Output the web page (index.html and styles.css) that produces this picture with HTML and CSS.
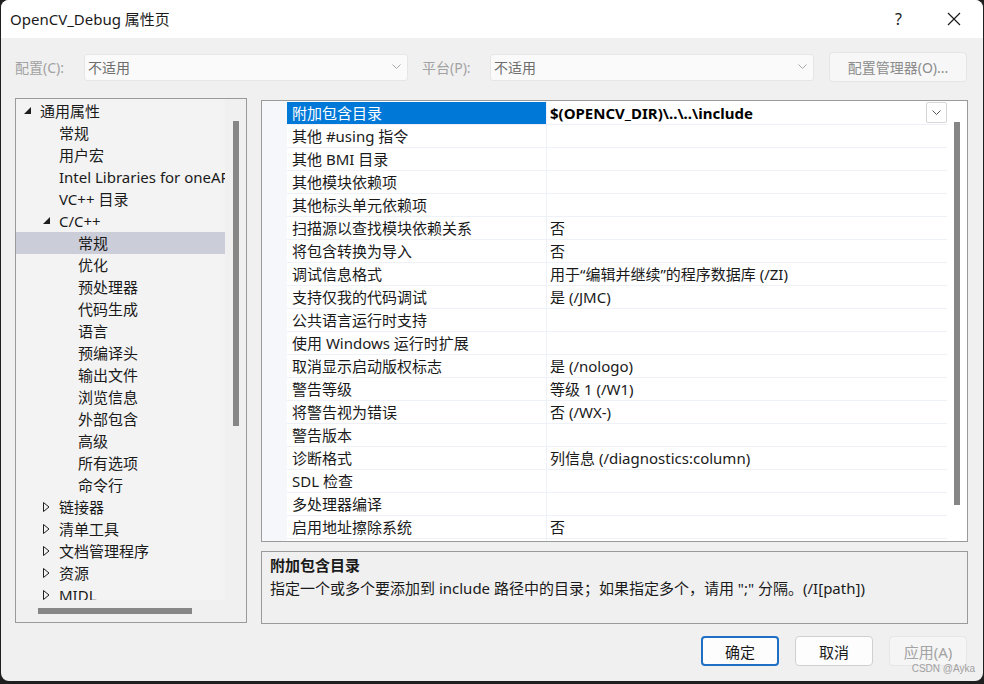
FILE: index.html
```html
<!DOCTYPE html>
<html lang="zh-CN">
<head>
    <meta charset="UTF-8">
    <title>OpenCV_Debug 属性页</title>
    <link rel="stylesheet" href="styles.css">
</head>
<body>
<div class="window">
    <div class="titlebar">
        <span class="title">OpenCV_Debug 属性页</span>
        <span class="help">?</span>
        <span class="close">
            <svg width="14" height="14" viewBox="0 0 14 14"><path d="M1 1L13 13M13 1L1 13" stroke="#1a1a1a" stroke-width="1.2" fill="none"/></svg>
        </span>
    </div>

    <div class="toolbar">
        <span class="lbl">配置(C):</span>
        <div class="combo"><span>不适用</span><svg width="9" height="6" viewBox="0 0 9 6"><path d="M0.5 0.5L4.5 4.5L8.5 0.5" stroke="#a8a8a8" fill="none"/></svg></div>
        <span class="lbl lbl2">平台(P):</span>
        <div class="combo"><span>不适用</span><svg width="9" height="6" viewBox="0 0 9 6"><path d="M0.5 0.5L4.5 4.5L8.5 0.5" stroke="#a8a8a8" fill="none"/></svg></div>
        <div class="tbtn">配置管理器(O)...</div>
    </div>

    <div class="main">
        <div class="tree">
            <div class="tree-list">
                <div class="node l0"><span class="twist"><svg width="8" height="8" viewBox="0 0 8 8"><polygon points="7,0 7,7 0,7" fill="#1e1e1e"/></svg></span>通用属性</div>
                <div class="node l1"><span class="twist"></span>常规</div>
                <div class="node l1"><span class="twist"></span>用户宏</div>
                <div class="node l1"><span class="twist"></span>Intel Libraries for oneAPI</div>
                <div class="node l1"><span class="twist"></span>VC++ 目录</div>
                <div class="node l1"><span class="twist"><svg width="8" height="8" viewBox="0 0 8 8"><polygon points="7,0 7,7 0,7" fill="#1e1e1e"/></svg></span>C/C++</div>
                <div class="node l2 sel"><span class="twist"></span>常规</div>
                <div class="node l2"><span class="twist"></span>优化</div>
                <div class="node l2"><span class="twist"></span>预处理器</div>
                <div class="node l2"><span class="twist"></span>代码生成</div>
                <div class="node l2"><span class="twist"></span>语言</div>
                <div class="node l2"><span class="twist"></span>预编译头</div>
                <div class="node l2"><span class="twist"></span>输出文件</div>
                <div class="node l2"><span class="twist"></span>浏览信息</div>
                <div class="node l2"><span class="twist"></span>外部包含</div>
                <div class="node l2"><span class="twist"></span>高级</div>
                <div class="node l2"><span class="twist"></span>所有选项</div>
                <div class="node l2"><span class="twist"></span>命令行</div>
                <div class="node l1"><span class="twist"><svg width="7" height="10" viewBox="0 0 7 10"><polygon points="0.5,0.5 6,5 0.5,9.5" fill="none" stroke="#1e1e1e"/></svg></span>链接器</div>
                <div class="node l1"><span class="twist"><svg width="7" height="10" viewBox="0 0 7 10"><polygon points="0.5,0.5 6,5 0.5,9.5" fill="none" stroke="#1e1e1e"/></svg></span>清单工具</div>
                <div class="node l1"><span class="twist"><svg width="7" height="10" viewBox="0 0 7 10"><polygon points="0.5,0.5 6,5 0.5,9.5" fill="none" stroke="#1e1e1e"/></svg></span>文档管理程序</div>
                <div class="node l1"><span class="twist"><svg width="7" height="10" viewBox="0 0 7 10"><polygon points="0.5,0.5 6,5 0.5,9.5" fill="none" stroke="#1e1e1e"/></svg></span>资源</div>
                <div class="node l1"><span class="twist"><svg width="7" height="10" viewBox="0 0 7 10"><polygon points="0.5,0.5 6,5 0.5,9.5" fill="none" stroke="#1e1e1e"/></svg></span>MIDL</div>
            </div>
            <div class="vscroll"><div class="thumb-v tree-thumb"></div></div>
            <div class="hscroll"><div class="thumb-h"></div></div>
            <div class="corner"></div>
        </div>

        <div class="right">
            <div class="grid">
                <div class="gutter"></div>
                <div class="rows">
                    <div class="row"><div class="name sel">附加包含目录</div><div class="val bold"><span>$(OPENCV_DIR)\..\..\include</span><span class="dd"><svg width="9" height="6" viewBox="0 0 9 6"><path d="M0.5 0.5L4.5 4.5L8.5 0.5" stroke="#555" fill="none"/></svg></span></div></div>
                    <div class="row"><div class="name">其他 #using 指令</div><div class="val"></div></div>
                    <div class="row"><div class="name">其他 BMI 目录</div><div class="val"></div></div>
                    <div class="row"><div class="name">其他模块依赖项</div><div class="val"></div></div>
                    <div class="row"><div class="name">其他标头单元依赖项</div><div class="val"></div></div>
                    <div class="row"><div class="name">扫描源以查找模块依赖关系</div><div class="val">否</div></div>
                    <div class="row"><div class="name">将包含转换为导入</div><div class="val">否</div></div>
                    <div class="row"><div class="name">调试信息格式</div><div class="val">用于“编辑并继续”的程序数据库 (/ZI)</div></div>
                    <div class="row"><div class="name">支持仅我的代码调试</div><div class="val">是 (/JMC)</div></div>
                    <div class="row"><div class="name">公共语言运行时支持</div><div class="val"></div></div>
                    <div class="row"><div class="name">使用 Windows 运行时扩展</div><div class="val"></div></div>
                    <div class="row"><div class="name">取消显示启动版权标志</div><div class="val">是 (/nologo)</div></div>
                    <div class="row"><div class="name">警告等级</div><div class="val">等级 1 (/W1)</div></div>
                    <div class="row"><div class="name">将警告视为错误</div><div class="val">否 (/WX-)</div></div>
                    <div class="row"><div class="name">警告版本</div><div class="val"></div></div>
                    <div class="row"><div class="name">诊断格式</div><div class="val">列信息 (/diagnostics:column)</div></div>
                    <div class="row"><div class="name">SDL 检查</div><div class="val"></div></div>
                    <div class="row"><div class="name">多处理器编译</div><div class="val"></div></div>
                    <div class="row"><div class="name">启用地址擦除系统</div><div class="val">否</div></div>
                    <div class="row"><div class="name">启用模糊器支持(实验性)</div><div class="val">否</div></div>
                </div>
                <div class="vscroll grid-scroll"><div class="thumb-v grid-thumb"></div></div>
            </div>
            <div class="desc">
                <div class="desc-title">附加包含目录</div>
                <div class="desc-text">指定一个或多个要添加到 include 路径中的目录；如果指定多个，请用 ";" 分隔。(/I[path])</div>
            </div>
        </div>
    </div>

    <div class="footer">
        <div class="btn default">确定</div>
        <div class="btn">取消</div>
        <div class="btn disabled">应用(A)</div>
    </div>
    <span class="watermark">CSDN @Ayka</span>
</div>
</body>
</html>
```

FILE: styles.css
```css
*{
    margin: 0;
    padding: 0;
    box-sizing: border-box;
}
body{
    background: #1f1f1f;
    width: 984px;
    height: 684px;
    overflow: hidden;
    font-family: "Noto Sans", "Noto Sans CJK SC", sans-serif;
    font-size: 15px;
    color: #1a1a1a;
}
.window{
    position: relative;
    width: 982px;
    height: 681px;
    margin: 0 0 0 1px;
    background: #f0f0f0;
    border-radius: 8px;
    overflow: hidden;
    display: flex;
    flex-direction: column;
}
.titlebar{
    height: 38px;
    background: #fff;
    display: flex;
    align-items: center;
    padding: 0 0 1px 9px;
}
.title{
    flex: 1;
}
.help{
    width: 20px;
    margin-right: 32px;
    font-size: 16px;
}
.close{
    width: 14px;
    height: 14px;
    margin-right: 22px;
    display: flex;
}

/* 配置 / 平台 */
.toolbar{
    display: flex;
    align-items: center;
    height: 30px;
    margin-top: 14px;
    padding-left: 14px;
}
.lbl{
    width: 69px;
    color: #a2a2a2;
    font-size: 14px;
}
.lbl2{
    width: 68px;
    margin-left: 14px;
}
.combo{
    width: 324px;
    height: 27px;
    background: #fafafa;
    border: 1px solid #e6e6e6;
    border-radius: 3px;
    display: flex;
    align-items: center;
    justify-content: space-between;
    padding: 0 6px 0 3px;
    color: #6e6e6e;
    font-size: 14px;
}
.tbtn{
    width: 138px;
    height: 30px;
    margin-left: 15px;
    border: 1px solid #e5e5e5;
    border-radius: 4px;
    background: #f7f7f7;
    color: #8c8c8c;
    font-size: 14px;
    display: flex;
    align-items: center;
    justify-content: center;
}

.main{
    display: flex;
    margin-top: 16px;
    padding-left: 14px;
    gap: 14px;
}

/* 左侧树 */
.tree{
    width: 232px;
    height: 525px;
    border: 1px solid #9a9a9a;
    display: grid;
    grid-template-columns: 1fr 21px;
    grid-template-rows: 1fr 22px;
    background: #f0f0f0;
}
.tree-list{
    background: #f3f3f3;
    padding-top: 1px;
    overflow: hidden;
    white-space: nowrap;
}
.node{
    height: 22px;
    display: flex;
    align-items: center;
    line-height: 22px;
}
.node.sel{
    background: #cbcdd8;
}
.twist{
    width: 16px;
    flex: none;
    display: flex;
    align-items: center;
}
.l0{ padding-left: 8px; }
.l1{ padding-left: 27px; }
.l2{ padding-left: 46px; }
.vscroll{
    background: #f0f0f0;
}
.thumb-v{
    width: 6px;
    background: #868686;
}
.tree-thumb{
    height: 305px;
    margin: 22px 0 0 8px;
}
.hscroll{
    padding: 8px 0 0 22px;
}
.thumb-h{
    width: 154px;
    height: 6px;
    background: #868686;
}

/* 右侧属性表 */
.right{
    margin-top: 2px;
    width: 707px;
    display: flex;
    flex-direction: column;
    gap: 9px;
}
.grid{
    height: 442px;
    border: 1px solid #9a9a9a;
    display: flex;
    background: #fff;
}
.gutter{
    width: 25px;
    background: #f5f7fb;
}
.rows{
    flex: 1;
    overflow: hidden;
    padding-top: 1px;
}
.row{
    height: 23px;
    display: grid;
    grid-template-columns: 259px 1fr;
    border-bottom: 1px solid #eef1f8;
    white-space: nowrap;
}
.name{
    padding-left: 5px;
    line-height: 22px;
}
.name.sel{
    background: #0078d7;
    color: #fff;
}
.val{
    border-left: 1px solid #eef1f8;
    padding-left: 3px;
    line-height: 22px;
    display: flex;
    justify-content: space-between;
}
.bold{
    font-weight: bold;
    color: #000;
}
.dd{
    width: 21px;
    height: 21px;
    border: 1px solid #d6d6d6;
    border-radius: 2px;
    background: #fff;
    display: flex;
    align-items: center;
    justify-content: center;
}
.grid-scroll{
    width: 20px;
    background: #fff;
}
.grid-thumb{
    height: 383px;
    margin: 21px 0 0 7px;
}

.desc{
    height: 73px;
    border: 1px solid #9a9a9a;
    padding: 2px 8px;
}
.desc-title{
    font-weight: bold;
    line-height: 22px;
}
.desc-text{
    line-height: 24px;
}

/* 按钮 */
.footer{
    display: flex;
    justify-content: flex-end;
    gap: 16px;
    margin-top: 12px;
    padding-right: 16px;
}
.btn{
    width: 78px;
    height: 30px;
    border: 1px solid #d0d0d0;
    border-radius: 4px;
    background: #fdfdfd;
    display: flex;
    align-items: center;
    justify-content: center;
}
.btn.default{
    border: 2px solid #1f6fc4;
}
.btn.disabled{
    border-color: #e6e6e6;
    background: #f5f5f5;
    color: #a3a3a3;
}
.watermark{
    position: absolute;
    right: 8px;
    bottom: 7px;
    font-size: 10px;
    color: #a0a0a0;
    font-family: "Liberation Sans", sans-serif;
}
```
